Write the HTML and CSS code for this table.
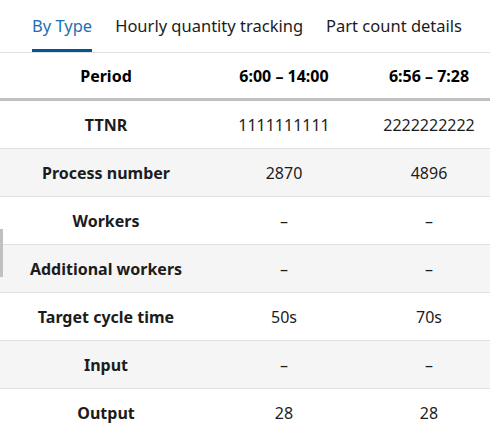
FILE: index.html
```html
<!DOCTYPE html>
<html>
<head>
<meta charset="utf-8">
<link rel="stylesheet" href="styles.css">
</head>
<body>
<div class="page">
  <nav class="tabs">
    <div class="tab active">By Type</div>
    <div class="tab">Hourly quantity tracking</div>
    <div class="tab">Part count details</div>
  </nav>
  <div class="table-wrap">
    <table class="grid">
      <colgroup><col class="c1"><col class="c2"><col class="c3"></colgroup>
      <thead>
        <tr><th>Period</th><th>6:00 – 14:00</th><th>6:56 – 7:28</th></tr>
      </thead>
      <tbody>
        <tr><th>TTNR</th><td>1111111111</td><td>2222222222</td></tr>
        <tr class="alt"><th>Process number</th><td>2870</td><td>4896</td></tr>
        <tr><th>Workers</th><td>–</td><td>–</td></tr>
        <tr class="alt"><th>Additional workers</th><td>–</td><td>–</td></tr>
        <tr><th>Target cycle time</th><td>50s</td><td>70s</td></tr>
        <tr class="alt"><th>Input</th><td>–</td><td>–</td></tr>
        <tr><th>Output</th><td>28</td><td>28</td></tr>
      </tbody>
    </table>
    <div class="scroll-thumb"></div>
  </div>
</div>
</body>
</html>
```
FILE: styles.css
```css
html, body { margin: 0; padding: 0; background: #fff; }
body { font-family: "Noto Sans", "Open Sans", sans-serif; color: #1c1c1c; width: 490px; height: 436px; overflow: hidden; }
.tabs { display: flex; gap: 23px; padding-left: 32px; height: 52px; border-bottom: 1px solid #e0e0e0; box-sizing: content-box; }
.tab { font-size: 16.5px; line-height: 20px; padding-top: 16px; height: 33px; box-sizing: border-box; color: #1c1c1c; }
.tab.active { color: #1c6fb3; border-bottom: 3px solid #00568f; height: 52px; }
.table-wrap { position: relative; width: 502px; }
.grid { border-collapse: separate; border-spacing: 0; table-layout: fixed; width: 502px; font-size: 16px; }
.c1 { width: 212px; } .c2 { width: 144px; } .c3 { width: 146px; }
.grid th, .grid td { text-align: center; padding: 0; box-sizing: border-box; }
.grid thead th { height: 48px; font-weight: 700; font-size: 16px; color: #000; border-bottom: 3px solid #c0c0c0; }
.grid tbody th, .grid tbody td { height: 48px; border-bottom: 1px solid #e0e0e0; }
.grid tbody tr:last-child th, .grid tbody tr:last-child td { border-bottom: none; }
.grid tbody th { font-weight: 700; font-size: 16px; color: #1c1c1c; }
.grid td { font-weight: 400; color: #1c1c1c; }
.grid tr.alt { background: #f5f5f5; }
.scroll-thumb { position: absolute; left: 0; top: 176px; width: 3px; height: 48px; background: #c0c0c0; }
```
